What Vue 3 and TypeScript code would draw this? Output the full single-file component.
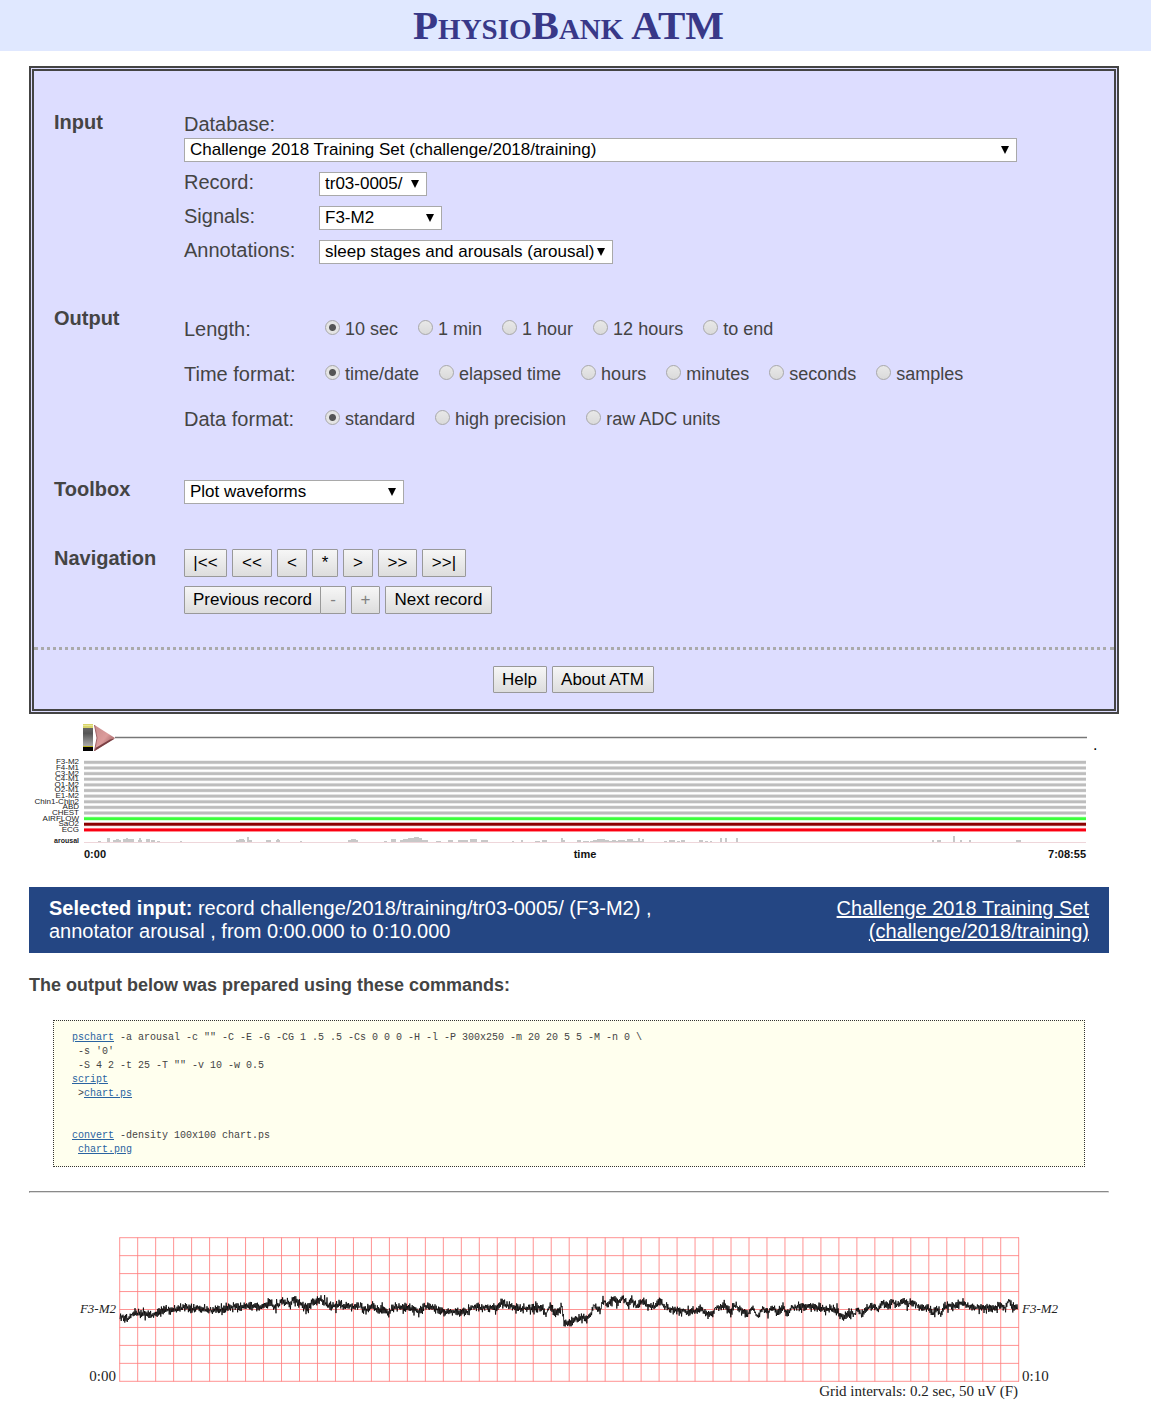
<script setup lang="ts">
import { ref } from 'vue'

interface Option { value: string; label: string }
interface RadioRow { name: string; label: string; options: string[] }
interface NavButton { label: string; width: number; disabled?: boolean; joined?: boolean }
interface CommandLine { before?: string; link?: string; after?: string }

const selectors = ref([
  { id: 'record', label: 'Record:', width: 108, value: 'tr03-0005/' },
  { id: 'signals', label: 'Signals:', width: 123, value: 'F3-M2' },
  { id: 'annotations', label: 'Annotations:', width: 294, value: 'sleep stages and arousals (arousal)' },
])

const databases: Option[] = [
  { value: 'challenge/2018/training', label: 'Challenge 2018 Training Set (challenge/2018/training)' },
]

const radioRows: RadioRow[] = [
  { name: 'length', label: 'Length:', options: ['10 sec', '1 min', '1 hour', '12 hours', 'to end'] },
  { name: 'tfmt', label: 'Time format:', options: ['time/date', 'elapsed time', 'hours', 'minutes', 'seconds', 'samples'] },
  { name: 'dfmt', label: 'Data format:', options: ['standard', 'high precision', 'raw ADC units'] },
]
const chosen = ref<Record<string, string>>({ length: '10 sec', tfmt: 'time/date', dfmt: 'standard' })

const navButtons: NavButton[][] = [
  [
    { label: '|<<', width: 43 },
    { label: '<<', width: 40 },
    { label: '<', width: 30 },
    { label: '*', width: 26 },
    { label: '>', width: 30 },
    { label: '>>', width: 39 },
    { label: '>>|', width: 44 },
  ],
  [
    { label: 'Previous record', width: 137 },
    { label: '-', width: 26, disabled: true, joined: true },
    { label: '+', width: 29, disabled: true },
    { label: 'Next record', width: 107 },
  ],
]

const commands: CommandLine[] = [
  { link: 'pschart', after: ' -a arousal -c "" -C -E -G -CG 1 .5 .5 -Cs 0 0 0 -H -l -P 300x250 -m 20 20 5 5 -M -n 0 \\' },
  { before: " -s '0'" },
  { before: ' -S 4 2 -t 25 -T "" -v 10 -w 0.5' },
  { link: 'script' },
  { before: ' >', link: 'chart.ps' },
  {},
  {},
  { link: 'convert', after: ' -density 100x100 chart.ps' },
  { before: ' ', link: 'chart.png' },
]

// Availability strips of the record overview, one per signal
const strips = [
  'F3-M2', 'F4-M1', 'C3-M2', 'C4-M1', 'O1-M2', 'O2-M1', 'E1-M2',
  'Chin1-Chin2', 'ABD', 'CHEST', 'AIRFLOW', 'SaO2', 'ECG',
].map((name, i) => ({
  name,
  y: 48.3 + i * 5.63,
  color: ['#3cff3c', '#8b0000', '#fb0012'][i - 10] ?? '#bdbdbd',
}))

// Arousal density marks: [x, width, height]
const arousals: [number, number, number][] = [
  [69, 3, 1], [78, 3, 4], [84, 8, 2], [87, 3, 3], [94, 11, 3], [97, 2, 4], [109, 4, 2], [110, 2, 4],
  [117, 4, 3], [122, 4, 2], [128, 3, 1], [151, 2, 1], [207, 9, 2], [210, 5, 3], [218, 2, 5], [220, 3, 2],
  [237, 5, 2], [247, 4, 2], [248, 2, 3], [271, 2, 1], [319, 10, 2], [322, 5, 3], [355, 3, 1], [362, 5, 3],
  [371, 28, 2], [374, 9, 3], [379, 14, 4], [385, 5, 5], [407, 5, 1], [419, 5, 2], [429, 10, 2],
  [441, 7, 3], [452, 7, 2], [483, 2, 1], [492, 2, 2], [506, 5, 1], [513, 5, 2], [532, 2, 4], [534, 2, 2],
  [548, 4, 2], [554, 6, 1], [561, 54, 1], [564, 16, 2], [568, 8, 3], [583, 4, 2], [589, 7, 2],
  [598, 6, 3], [609, 2, 4], [613, 2, 3], [635, 3, 1], [640, 6, 2], [648, 3, 1], [652, 4, 2],
  [670, 4, 2], [676, 3, 1], [681, 2, 1], [691, 2, 4], [696, 2, 4], [707, 2, 4],
  [903, 2, 2], [908, 4, 2], [924, 2, 6], [931, 2, 2], [940, 2, 2], [987, 5, 2],
]

// Slow component of the F3-M2 trace as [x, y] knots
const knots: [number, number][] = [
  [91, 123], [99, 126], [104, 120], [124, 122], [133, 118], [151, 115], [174, 116], [184, 118], [196, 115],
  [214, 113], [234, 114], [241, 109], [246, 115], [253, 108], [261, 112], [264, 107], [279, 115], [284, 109],
  [293, 107], [301, 114], [311, 112], [331, 114], [338, 117], [345, 112], [349, 118], [354, 115], [359, 121],
  [363, 115], [381, 115], [391, 119], [396, 113], [414, 119], [438, 119], [443, 114], [468, 115], [473, 110],
  [488, 115], [504, 116], [513, 115], [517, 121], [521, 112], [526, 119], [531, 117], [533, 113], [535, 131],
  [543, 129], [551, 125], [558, 125], [563, 119], [565, 112], [571, 118], [574, 107], [579, 112], [584, 105],
  [589, 110], [594, 104], [599, 112], [603, 106], [608, 113], [614, 108], [619, 113], [626, 113], [631, 108],
  [638, 115], [651, 118], [663, 119], [671, 116], [683, 122], [686, 115], [696, 113], [702, 121], [705, 112],
  [711, 116], [719, 121], [724, 115], [729, 124], [734, 115], [739, 120], [744, 114], [749, 120], [754, 114],
  [758, 121], [763, 115], [773, 113], [791, 115], [808, 117], [814, 126], [819, 121], [826, 121], [828, 115],
  [833, 122], [838, 115], [844, 113], [849, 117], [854, 109], [859, 115], [863, 107], [868, 112], [873, 108],
  [878, 112], [883, 109], [891, 115], [898, 114], [904, 120], [908, 116], [912, 122], [915, 114], [928, 112],
  [934, 109], [939, 114], [958, 115], [966, 115], [971, 110], [976, 115], [980, 107], [984, 115], [989, 114],
]

function buildTrace(): string {
  let seed = 20180005
  const random = () => {
    seed = (seed * 1103515245 + 12345) % 2147483648
    return seed / 2147483648
  }
  const points: string[] = []
  let k = 0
  let sign = 1
  for (let x = 91; x <= 989; x += 0.6) {
    while (k < knots.length - 2 && x > knots[k + 1][0]) k++
    const [x0, y0] = knots[k]
    const [x1, y1] = knots[k + 1]
    const base = y0 + ((y1 - y0) * (x - x0)) / (x1 - x0)
    const y = base + sign * (1.5 + random() * random() * 5) + (random() - 0.5) * 3
    sign = -sign
    points.push(`${x.toFixed(1)},${y.toFixed(1)}`)
  }
  return points.join(' ')
}
const trace = buildTrace()

const gridColumns = Array.from({ length: 51 }, (_, i) => 90.7 + i * 17.98)
const gridRows = Array.from({ length: 9 }, (_, i) => 44.7 + i * 17.95)
</script>

<template>
  <header class="banner"><h1>PhysioBank ATM</h1></header>

  <main class="page">
    <form class="panel" @submit.prevent>
      <section class="group">
        <h2>Input</h2>
        <div class="fields offset wide">
          <label class="db-label" for="database">Database:</label>
          <span class="select db-select">
            <select id="database">
              <option v-for="db in databases" :key="db.value" :value="db.value">{{ db.label }}</option>
            </select>
          </span>
          <div v-for="s in selectors" :key="s.id" class="field">
            <label :for="s.id">{{ s.label }}</label>
            <span class="select" :style="{ width: s.width + 'px' }">
              <select :id="s.id" v-model="s.value"><option>{{ s.value }}</option></select>
            </span>
          </div>
        </div>
      </section>

      <section class="group">
        <h2>Output</h2>
        <div class="fields">
          <div v-for="row in radioRows" :key="row.name" class="radio-row" role="radiogroup" :aria-label="row.label">
            <span class="row-label">{{ row.label }}</span>
            <label v-for="option in row.options" :key="option" class="radio">
              <input v-model="chosen[row.name]" type="radio" :name="row.name" :value="option">{{ option }}
            </label>
          </div>
        </div>
      </section>

      <section class="group toolbox">
        <h2><label for="tool">Toolbox</label></h2>
        <div class="fields offset">
          <span class="select tool-select">
            <select id="tool"><option>Plot waveforms</option></select>
          </span>
        </div>
      </section>

      <section class="group">
        <h2>Navigation</h2>
        <div class="fields offset nav">
          <div v-for="(row, i) in navButtons" :key="i" class="nav-row">
            <button
              v-for="b in row"
              :key="b.label"
              type="button"
              :class="{ joined: b.joined }"
              :disabled="b.disabled"
              :style="{ width: b.width + 'px' }"
            >{{ b.label }}</button>
          </div>
        </div>
      </section>

      <div class="panel-footer">
        <button type="button" class="help">Help</button>
        <button type="button" class="about">About ATM</button>
      </div>
    </form>

    <svg class="overview" viewBox="0 0 1080 161" role="img" aria-label="Record overview">
      <defs>
        <linearGradient id="knob" x1="0" y1="0" x2="0" y2="1">
          <stop offset="0" stop-color="#666" />
          <stop offset="0.3" stop-color="#555" />
          <stop offset="1" stop-color="#aaa" />
        </linearGradient>
        <linearGradient id="arrow" x1="0" y1="0" x2="1" y2="1">
          <stop offset="0" stop-color="#c58a8a" />
          <stop offset="0.5" stop-color="#dc9c9c" />
          <stop offset="1" stop-color="#7a3c40" />
        </linearGradient>
      </defs>
      <rect x="86" y="22" width="972" height="3" fill="#dedede" />
      <rect x="86" y="23" width="972" height="1" fill="#777" />
      <rect x="54" y="10" width="10" height="4" fill="#d8d46a" />
      <rect x="54" y="11" width="10" height="1" fill="#e8e69a" />
      <rect x="54" y="14" width="10" height="18" fill="url(#knob)" />
      <rect x="54" y="32" width="10" height="1" fill="#b8b020" />
      <rect x="54" y="33" width="10" height="4" fill="#000" />
      <path d="M65.5 11 L86 24 L65.5 37 L68 24 Z" fill="url(#arrow)" />
      <path d="M65.5 37 L86 24.5 L81 25.5 L66.5 34 Z" fill="#7a4044" />
      <path d="M65.5 11 L68 24 L65.5 37" fill="none" stroke="#a06468" />
      <text x="1064" y="36" class="dot">.</text>
      <g v-for="s in strips" :key="s.name">
        <rect x="55" :y="s.y - 2" width="1002" height="4" :fill="s.color" opacity="0.3" />
        <rect x="55" :y="s.y - 1.3" width="1002" height="2.7" :fill="s.color" />
        <text x="50" :y="s.y + 2" text-anchor="end" class="strip-name">{{ s.name }}</text>
      </g>
      <text x="50" y="129" text-anchor="end" class="strip-name bold">arousal</text>
      <rect x="55" y="128" width="1002" height="1" fill="#eed6da" />
      <rect v-for="(a, i) in arousals" :key="i" :x="a[0]" :y="128 - a[2]" :width="a[1]" :height="a[2]" fill="#c8c8c8" />
      <text x="55" y="144" class="axis">0:00</text>
      <text x="556" y="144" class="axis" text-anchor="middle">time</text>
      <text x="1057" y="144" class="axis" text-anchor="end">7:08:55</text>
    </svg>

    <section class="selected">
      <p><b>Selected input:</b> record challenge/2018/training/tr03-0005/ (F3-M2) ,<br>annotator arousal , from 0:00.000 to 0:10.000</p>
      <a href="#database">Challenge 2018 Training Set<br>(challenge/2018/training)</a>
    </section>

    <h3>The output below was prepared using these commands:</h3>
    <div class="commands">
      <div v-for="(line, i) in commands" :key="i" class="line"><span v-if="line.before">{{ line.before }}</span><a v-if="line.link" :href="'#' + line.link">{{ line.link }}</a><span v-if="line.after">{{ line.after }}</span></div>
    </div>
    <hr>

    <svg class="plot" viewBox="0 0 1080 213" role="img" aria-label="F3-M2 waveform">
      <g stroke="#ff8080" stroke-opacity="0.85">
        <line v-for="x in gridColumns" :key="'c' + x" :x1="x" :x2="x" y1="44.5" y2="188.5" />
        <line v-for="y in gridRows" :key="'r' + y" x1="90.5" x2="990" :y1="y" :y2="y" />
      </g>
      <polyline :points="trace" fill="none" stroke="#000" stroke-width="0.8" />
      <text x="87" y="120" text-anchor="end" class="lead">F3-M2</text>
      <text x="993" y="120" class="lead">F3-M2</text>
      <text x="87" y="188" text-anchor="end" class="tick">0:00</text>
      <text x="993" y="188" class="tick">0:10</text>
      <text x="989" y="203" text-anchor="end" class="tick">Grid intervals: 0.2 sec, 50 uV (F)</text>
    </svg>
  </main>
</template>

<style>
body {
  margin: 0;
  background: #fff;
}
</style>

<style scoped>
.banner {
  background: #e0e8ff;
  padding-right: 14px;
  text-align: center;
}
h1 {
  margin: 0;
  font: bold 41px/51px Georgia, "Liberation Serif", serif;
  font-variant: small-caps;
  color: #383888;
}
.page {
  padding: 15px 42px 0 29px;
  font-family: "Liberation Sans", Arial, sans-serif;
  color: #444;
}
.panel {
  margin-right: -10px;
  padding-top: 39px;
  border: 5px double #444;
  background: #ddf;
  font-size: 20px;
}
.group {
  display: grid;
  grid-template-columns: 130px 1fr;
  padding-left: 20px;
  margin-bottom: 42px;
}
.group.toolbox {
  margin-top: -6px;
}
h2 {
  margin: 0;
  font-size: 20px;
  line-height: 24px;
}
.offset {
  padding-top: 3px;
}
.wide {
  padding-right: 97px;
}
.db-label {
  display: block;
  line-height: 23px;
  margin-bottom: 2px;
}
.field {
  display: flex;
  align-items: center;
  height: 24px;
  margin-top: 10px;
}
.field label {
  width: 135px;
  line-height: 20px;
  margin-bottom: 4px;
}
.select {
  position: relative;
  display: block;
  height: 24px;
}
.tool-select {
  width: 220px;
}
.select::after {
  content: "";
  position: absolute;
  right: 8px;
  top: 8px;
  width: 8px;
  height: 8px;
  background: #000;
  clip-path: polygon(0 0, 100% 0, 50% 100%);
  pointer-events: none;
}
select {
  appearance: none;
  display: block;
  box-sizing: border-box;
  width: 100%;
  height: 24px;
  margin: 0;
  padding: 0 0 1px 5px;
  border: 1px solid #a9a9a9;
  border-radius: 0;
  background: #fff;
  color: #000;
  font: 17px/20px "Liberation Sans", Arial, sans-serif;
}
.radio-row {
  display: flex;
  align-items: center;
  box-sizing: border-box;
  height: 45px;
  padding-top: 2px;
}
.row-label {
  width: 141px;
}
.radio {
  display: flex;
  align-items: center;
  gap: 5px;
  margin-right: 20px;
  font-size: 18px;
}
.radio input {
  appearance: none;
  box-sizing: border-box;
  width: 15px;
  height: 15px;
  margin: 0 0 5px;
  border: 1px solid #a8a8a8;
  border-radius: 50%;
  background: linear-gradient(#e8e8e8, #dadada);
}
.radio input:checked {
  background: radial-gradient(circle, #555 3px, #e4e4e4 4px);
}
.nav {
  display: grid;
  gap: 9px;
}
.nav-row {
  display: flex;
  gap: 5px;
}
button {
  box-sizing: border-box;
  height: 28px;
  margin: 0;
  padding: 0;
  border: 1px solid #999;
  border-radius: 1px;
  background: linear-gradient(#f6f6f6, #dddddd);
  color: #000;
  font: 17px/20px "Liberation Sans", Arial, sans-serif;
  white-space: nowrap;
}
button:disabled {
  color: #808080;
}
.joined {
  margin-left: -6px;
}
.panel-footer {
  display: flex;
  justify-content: center;
  gap: 5px;
  margin-top: -9px;
  padding: 16px 2px 16px 0;
  border-top: 3px dotted #aaa;
}
.panel-footer button {
  height: 27px;
}
.help {
  width: 54px;
}
.about {
  width: 102px;
}
.overview,
.plot {
  display: block;
  width: 100%;
  height: auto;
}
.strip-name {
  font-size: 8px;
  fill: #222;
}
.strip-name.bold {
  font-size: 7px;
  font-weight: bold;
}
.axis {
  font-size: 11px;
  font-weight: bold;
  fill: #111;
}
.dot {
  font-size: 16px;
  fill: #000;
}
.selected {
  display: flex;
  justify-content: space-between;
  margin-top: 12px;
  padding: 10px 20px;
  background: #244683;
  color: #fff;
  font-size: 20px;
  line-height: 23px;
}
.selected p {
  margin: 0;
}
.selected a {
  color: #fff;
  text-align: right;
}
h3 {
  margin: 22px 0 25px;
  font-size: 18px;
  line-height: 20px;
}
.commands {
  margin: 0 24px;
  padding: 10px 18px 9px;
  border: 1px dotted #333;
  background: #ffe;
  font: 10px/14px "Liberation Mono", "Courier New", monospace;
}
.line {
  min-height: 14px;
  white-space: pre;
}
.commands a {
  color: #2a63a0;
}
hr {
  margin: 24px 0 0;
  border: 1px inset #ddd;
}
.lead {
  font: italic 13px "Liberation Serif", "Times New Roman", serif;
  fill: #222;
}
.tick {
  font: 15px "Liberation Serif", "Times New Roman", serif;
  fill: #222;
}
</style>
